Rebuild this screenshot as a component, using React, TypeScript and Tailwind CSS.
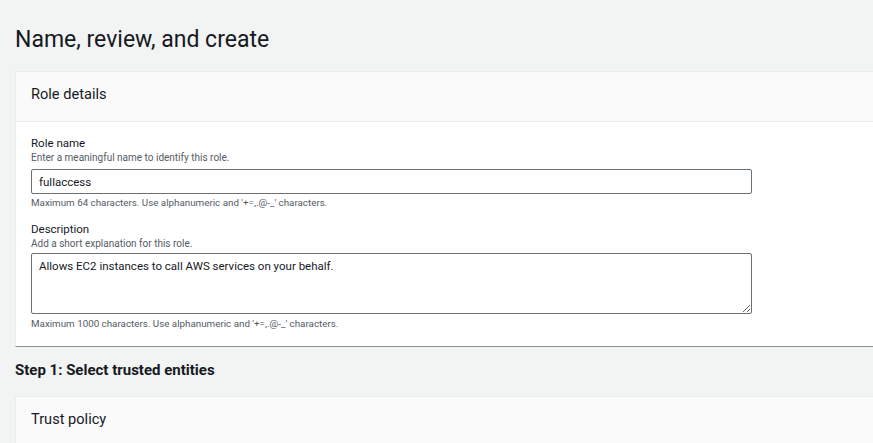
export default function App() {
  return (
    <div
      className="w-[873px] h-[443px] overflow-hidden bg-[#f2f3f3] text-[#16191f]"
      style={{ fontFamily: 'Roboto, "Noto Sans", Arial, sans-serif' }}
    >
      <div className="w-[1000px] pl-[15px]">
        {/* TITLE */}
        <h1 className="pt-[25px] text-[23px] leading-[30px] font-normal">
          Name, review, and create
        </h1>

        {/* ROLE DETAILS */}
        <section className="mt-[16px] bg-white border-t border-l border-[#eaeded] border-b border-b-[#879596]">
          <div className="h-[50px] pt-[12px] px-[15px] bg-[#fafafa] border-b border-[#eaeded]">
            <h2 className="text-[14.6px] leading-5">Role details</h2>
          </div>

          <div className="pl-[15px] pt-[13px] pb-[15px]">
            <div className="text-[11.5px] leading-4">Role name</div>
            <div className="text-[10px] leading-[14px] text-[#545b64]">
              Enter a meaningful name to identify this role.
            </div>
            <input
              defaultValue="fullaccess"
              className="mt-[4px] w-[721px] h-[25px] px-[7px] text-[11.5px] border border-[#687078] rounded-[2px] outline-none"
            />
            <div className="mt-[2px] text-[9.8px] leading-[14px] text-[#545b64]">
              Maximum 64 characters. Use alphanumeric and '+=,.@-_' characters.
            </div>

            <div className="mt-[11px] text-[11.5px] leading-4">Description</div>
            <div className="text-[10px] leading-[14px] text-[#545b64]">
              Add a short explanation for this role.
            </div>
            <textarea
              defaultValue="Allows EC2 instances to call AWS services on your behalf."
              className="block mt-[2px] w-[721px] h-[61px] px-[7px] py-[4px] text-[11.5px] leading-4 border border-[#687078] rounded-[2px] outline-none resize-y"
            />
            <div className="mt-[3px] text-[9.8px] leading-[14px] text-[#545b64]">
              Maximum 1000 characters. Use alphanumeric and '+=,.@-_' characters.
            </div>
          </div>
        </section>

        {/* STEP 1 */}
        <h3 className="pt-[13px] pb-[16px] text-[15px] leading-5 font-bold">
          Step 1: Select trusted entities
        </h3>
        <section className="bg-white border-t border-l border-[#eaeded]">
          <div className="h-[50px] pt-[12px] px-[15px] bg-[#fafafa] border-b border-[#eaeded]">
            <h2 className="text-[14.6px] leading-5">Trust policy</h2>
          </div>
        </section>
      </div>
    </div>
  );
}
